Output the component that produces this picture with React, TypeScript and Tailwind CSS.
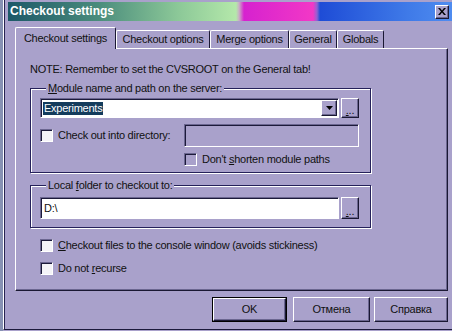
import React from 'react'

// Win98-ish "Checkout settings" dialog with a lavender colour scheme

const sunken =
  'border border-t-[#6b6690] border-l-[#6b6690] border-b-white border-r-white shadow-[inset_1px_1px_0_#1c1a3a]'
const raised =
  'border border-t-white border-l-white border-b-[#1a1833] border-r-[#1a1833] shadow-[inset_-1px_-1px_0_#6b6690]'

function Check({ disabled }: { disabled?: boolean }) {
  return (
    <span
      className={
        'block w-[13px] h-[13px] shrink-0 ' +
        sunken +
        (disabled ? ' bg-[#a9a1cb]' : ' bg-[#f4f3f8]')
      }
    />
  )
}

function DotsButton() {
  return (
    <div className={'w-[18px] h-full flex items-end justify-center pb-[3px] bg-[#a9a1cb] ' + raised}>
      <span className="leading-[8px] text-[11px]">
        <span className="underline">.</span>..
      </span>
    </div>
  )
}

function Tab({ label, w }: { label: string; w: string }) {
  return (
    <div
      className={
        'h-[18px] flex items-center justify-center border-t border-l border-t-white border-l-white border-r border-r-[#1a1833] rounded-tl-[2px] rounded-tr-[2px] ' +
        w
      }
    >
      {label}
    </div>
  )
}

export default function App() {
  return (
    <div className="w-[452px] h-[331px] overflow-hidden bg-[#a9a1cb] flex font-['Liberation_Sans',Arial,sans-serif] text-[11px] leading-[13px] tracking-[-0.25px] text-[#111]">
      {/* desktop strip behind the window */}
      <div className="w-[3px] shrink-0 bg-[#8791b3]" />
      <div className="self-start h-[330px] flex-1 flex flex-col border-l border-l-white border-b border-b-[#1c1a3c]">
        <div className="flex-1 flex flex-col border-l border-l-[#262250] pl-[3px] pt-[2px]">
          {/* title bar */}
          <div className="h-[19px] flex items-center justify-between pl-[2px] pr-[3px] bg-[linear-gradient(to_right,#1d5868_0px,#4a8c7c_90px,#8cc898_170px,#b4e8aa_228px,#c9b0c4_231px,#d622cf_236px,#f238c6_305px,#9062d2_309px,#1e4cd6_312px,#3f7ae8_400px,#4f8cf0_100%)]">
            <span className="text-white font-bold text-[12px] leading-[15px] tracking-normal">Checkout settings</span>
            <div className={'w-[14px] h-[14px] flex items-center justify-center bg-[#a9a1cb] ' + raised}>
              <svg width="8" height="7" viewBox="0 0 8 7">
                <path d="M0 0h2l2 2.5L6 0h2L5 3.5 8 7H6L4 4.5 2 7H0l3-3.5z" fill="#000" />
              </svg>
            </div>
          </div>

          <div className="flex flex-col pl-[7px] pr-[4px]">
            {/* tabs */}
            <div className="mt-[6px] h-[21px] flex items-end">
              <div className="relative z-10 mb-[-1px] w-[101px] h-[22px] flex items-start justify-center pt-[4px] bg-[#a9a1cb] border-t border-l border-t-white border-l-white border-r border-r-[#1a1833] rounded-tl-[2px] rounded-tr-[2px]">
                Checkout settings
              </div>
              <Tab label="Checkout options" w="w-[94px]" />
              <Tab label="Merge options" w="w-[79px]" />
              <Tab label="General" w="w-[48px]" />
              <Tab label="Globals" w="w-[47px]" />
            </div>

            {/* tab page */}
            <div className="h-[243px] flex flex-col pl-[14px] pt-[14px] border-t border-l border-t-white border-l-white border-r border-b border-r-[#1a1833] border-b-[#1a1833] shadow-[inset_-1px_-1px_0_#6b6690]">
              <div className="h-[13px]">NOTE: Remember to set the CVSROOT on the General tab!</div>

              <fieldset className="mt-[6px] w-[341px] pl-[9px] pr-[11px] pt-[3px] pb-[6px] border border-[#25215a] shadow-[inset_1px_1px_0_#fff,1px_1px_0_#fff]">
                <legend className="ml-[6px] px-[2px] bg-[#a9a1cb] leading-[13px]">
                  <span className="underline">M</span>odule name and path on the server:
                </legend>
                <div className="h-[20px] flex gap-[2px]">
                  <div className={'w-[299px] h-full flex items-center pl-[2px] pr-[1px] bg-white ' + sunken}>
                    <span className="px-[1px] bg-[#143c5c] text-white">Experiments</span>
                    <div className={'ml-auto w-[16px] h-[16px] flex items-center justify-center bg-[#a9a1cb] ' + raised}>
                      <svg width="7" height="4" viewBox="0 0 7 4">
                        <path d="M0 0h7L3.5 4z" fill="#000" />
                      </svg>
                    </div>
                  </div>
                  <DotsButton />
                </div>
                <div className="mt-[6px] h-[23px] flex items-center">
                  <Check />
                  <span className="ml-[5px]">Check out into directory:</span>
                  <div className={'ml-auto w-[175px] h-full bg-[#a9a1cb] ' + sunken} />
                </div>
                <div className="mt-[6px] h-[13px] flex items-center ml-[144px]">
                  <Check disabled />
                  <span className="ml-[5px]">
                    Don't <span className="underline">s</span>horten module paths
                  </span>
                </div>
              </fieldset>

              <fieldset className="mt-[6px] w-[341px] pl-[9px] pr-[11px] pt-[5px] pb-[8px] border border-[#25215a] shadow-[inset_1px_1px_0_#fff,1px_1px_0_#fff]">
                <legend className="ml-[6px] px-[2px] bg-[#a9a1cb] leading-[13px]">
                  Local <span className="underline">f</span>older to checkout to:
                </legend>
                <div className="h-[22px] flex gap-[2px]">
                  <div className={'w-[299px] h-full flex items-center pl-[3px] bg-white ' + sunken}>D:\</div>
                  <DotsButton />
                </div>
              </fieldset>

              <div className="mt-[11px] ml-[10px] h-[13px] flex items-center">
                <Check />
                <span className="ml-[5px]">
                  <span className="underline">C</span>heckout files to the console window (avoids stickiness)
                </span>
              </div>
              <div className="mt-[10px] ml-[10px] h-[13px] flex items-center">
                <Check />
                <span className="ml-[5px]">
                  Do not <span className="underline">r</span>ecurse
                </span>
              </div>
            </div>

            {/* buttons */}
            <div className="mt-[6px] h-[25px] flex justify-end">
              <div className="w-[75px] h-full border border-black">
                <div className={'h-full flex items-center justify-center bg-[#a9a1cb] ' + raised}>OK</div>
              </div>
              <div className={'ml-[6px] w-[77px] h-full flex items-center justify-center bg-[#a9a1cb] ' + raised}>
                Отмена
              </div>
              <div className={'ml-[4px] w-[74px] h-full flex items-center justify-center bg-[#a9a1cb] ' + raised}>
                Справка
              </div>
            </div>
          </div>
        </div>
      </div>
    </div>
  )
}
